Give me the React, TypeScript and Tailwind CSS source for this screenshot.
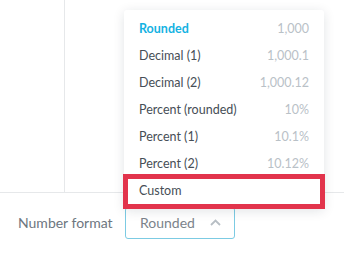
import React from "react";

const items: [string, string][] = [
  ["Rounded", "1,000"],
  ["Decimal (1)", "1,000.1"],
  ["Decimal (2)", "1,000.12"],
  ["Percent (rounded)", "10%"],
  ["Percent (1)", "10.1%"],
  ["Percent (2)", "10.12%"],
];

export default function App() {
  return (
    <div
      className="relative w-[344px] h-[254px] bg-white overflow-hidden"
      style={{ fontFamily: "Lato, 'Noto Sans', sans-serif" }}
    >
      <div className="flex h-[193px] border-b border-[#e6e8ea]">
        <div className="w-[65px] border-r border-[#e6e8ea]" />
        <div className="flex-1" />
      </div>
      <div className="flex items-center h-[61px] pl-[18px] pb-[2px]">
        <span className="text-[14px] text-[#6d7680] w-[107px]">Number format</span>
        <div className="flex items-center w-[110px] h-[32px] border border-[#7ccbe3] rounded-[3px] pl-[14px] bg-white">
          <span className="text-[14px] text-[#7b838b]">Rounded</span>
          <svg className="ml-[15px]" width="11" height="7" viewBox="0 0 11 7" fill="none">
            <path d="M1 6 L5.5 1.5 L10 6" stroke="#b7bec4" strokeWidth="1.8" />
          </svg>
        </div>
      </div>

      <div className="absolute left-[124px] top-[10px] w-[200px] bg-white rounded-[3px] shadow-[0_2px_12px_rgba(20,30,50,0.12)] pt-[6px] pb-[5px]">
        {items.map(([name, val], i) => (
          <div key={name} className="flex items-center justify-between h-[27px] px-[15px] text-[12.5px]">
            <span className={i === 0 ? "text-[#14b2e2] font-bold" : "text-[#464e56]"}>{name}</span>
            <span className="text-[#b9c1c7]">{val}</span>
          </div>
        ))}
        <div className="flex items-center h-[25px] mt-[1px] mx-[4px] px-[11px] text-[12.5px] text-[#464e56] outline-[5px] outline-solid outline-[#e2344c] relative z-10 bg-white">
          Custom
        </div>
      </div>
    </div>
  );
}
